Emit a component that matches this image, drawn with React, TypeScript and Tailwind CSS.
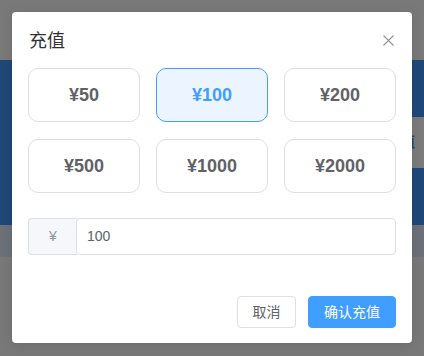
import { useState } from "react";

const AMOUNTS = [50, 100, 200, 500, 1000, 2000];

export default function App() {
  const [selected, setSelected] = useState(100);
  const [value, setValue] = useState("100");

  return (
    <div
      className="relative w-[424px] h-[356px] overflow-hidden bg-[#787878]"
      style={{ fontFamily: '"Liberation Sans", "Noto Sans CJK SC", sans-serif' }}
    >
      {/* page under the mask */}
      <div className="h-[60px] bg-[#797979]" />
      <div className="flex h-[165px] flex-col bg-[#1f4879]">
        <div className="ml-auto mt-[57px] flex h-[51px] w-[40px] items-center bg-[#7b7b7b] pl-[1px] text-[15px] font-bold text-[#1f4879]">
          充值
        </div>
      </div>
      <div className="h-[32px] bg-[#6c7079]" />

      {/* dialog */}
      <div className="absolute left-[12px] top-[12px] flex h-[331px] w-[400px] flex-col rounded-[4px] bg-white px-4 pb-[15px] pt-4 shadow-[0_2px_12px_rgba(0,0,0,0.1)]">
        <div className="flex h-6 items-center justify-between">
          <span className="pl-[1px] pt-[1px] text-[18px] leading-6 text-[#303133]">充值</span>
          <button className="flex h-4 w-4 items-center justify-center text-[#909399]">
            <svg width="11" height="11" viewBox="0 0 11 11" fill="none" stroke="currentColor" strokeWidth="1.1">
              <path d="M0.5 0.5L10.5 10.5M10.5 0.5L0.5 10.5" />
            </svg>
          </button>
        </div>

        <div className="mt-4 grid grid-cols-3 gap-x-4 gap-y-[17px]">
          {AMOUNTS.map((a) => {
            const active = a === selected;
            return (
              <button
                key={a}
                onClick={() => {
                  setSelected(a);
                  setValue(String(a));
                }}
                className={
                  active
                    ? "flex h-[54px] items-center justify-center rounded-[10px] border border-[#409eff] bg-[#ecf5ff] text-[18px] font-bold text-[#409eff]"
                    : "flex h-[54px] items-center justify-center rounded-[10px] border border-[#dcdfe6] bg-white text-[18px] font-bold text-[#606266]"
                }
              >
                ¥{a}
              </button>
            );
          })}
        </div>

        <div className="mt-[25px] flex h-[37px]">
          <div className="flex w-[49px] items-center justify-center rounded-l-[4px] border-y border-l border-[#dcdfe6] bg-[#f5f7fa] text-[14px] text-[#909399]">
            ¥
          </div>
          <input
            value={value}
            onChange={(e) => setValue(e.target.value)}
            className="-ml-[1px] min-w-0 flex-1 rounded-[4px] border border-[#dcdfe6] bg-white px-[10px] text-[14px] text-[#606266] outline-none"
          />
        </div>

        <div className="mt-auto flex justify-end gap-3">
          <button className="h-[32px] w-[59px] rounded-[4px] border border-[#dcdfe6] bg-white text-[14px] text-[#606266]">
            取消
          </button>
          <button className="h-[32px] w-[88px] rounded-[4px] border border-[#409eff] bg-[#409eff] text-[14px] text-white">
            确认充值
          </button>
        </div>
      </div>
    </div>
  );
}
